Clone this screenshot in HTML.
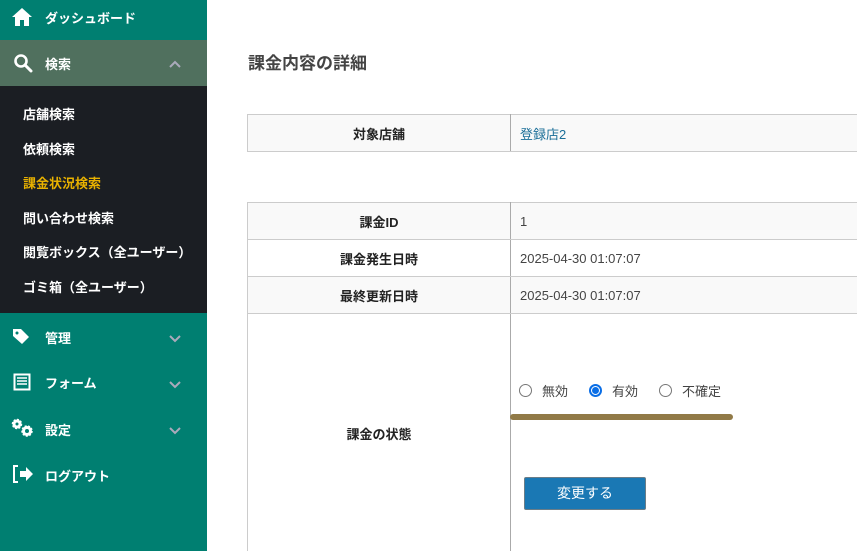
<!DOCTYPE html>
<html><head><meta charset="utf-8"><style>
*{margin:0;padding:0;box-sizing:border-box}
html,body{width:857px;height:551px;overflow:hidden}
body{font-family:"Liberation Sans","Noto Sans CJK JP",sans-serif;background:#fff;position:relative}
.sb{position:absolute;left:0;top:0;width:207px;height:551px;background:#007f71}
.row{position:absolute;left:0;width:207px;color:#fff;font-size:13px;font-weight:bold}
.row .t{position:absolute;left:45px}
.row svg{position:absolute}
.sub{position:absolute;left:0;top:86px;width:207px;height:227px;background:#1b1e23}
.sub div{position:absolute;left:23px;color:#fff;font-size:13px;font-weight:bold}
.chev{position:absolute;left:168px;width:14px;height:10px}
h1{position:absolute;left:248px;top:49px;font-size:17px;color:#444;font-weight:bold}
table{position:absolute;left:247px;width:620px;border-collapse:collapse;font-size:13px}
td{border:1px solid #ccc;height:37px}
td.h{width:263px;text-align:center;font-weight:bold;color:#222;border-right:1px solid #aaa}
td.v{padding-left:9px;color:#444}
.g td{background:#f9f9f9}
</style></head><body>
<div class="sb">
 <div class="row" style="top:0;height:40px">
  <svg style="left:11px;top:7px" width="22" height="20" viewBox="0 0 22 20"><path d="M11 1L1 10h3v9h5v-6h4v6h5v-9h3z" fill="#fff"/></svg>
  <span class="t" style="top:8px">ダッシュボード</span></div>
 <div class="row" style="top:40px;height:46px;background:#50705e">
  <svg style="left:13px;top:13px" width="20" height="20" viewBox="0 0 20 20"><circle cx="8" cy="8" r="5.5" stroke="#fff" stroke-width="2.6" fill="none"/><path d="M12 12l6 6" stroke="#fff" stroke-width="3" stroke-linecap="round"/></svg>
  <span class="t" style="top:14px">検索</span>
  <svg class="chev" style="top:19px" viewBox="0 0 14 10"><path d="M2 8l5-5 5 5" stroke="#aab" stroke-width="2" fill="none"/></svg></div>
 <div class="sub">
  <div style="top:18px">店舗検索</div>
  <div style="top:53px">依頼検索</div>
  <div style="top:87px;color:#e8b100">課金状況検索</div>
  <div style="top:122px">問い合わせ検索</div>
  <div style="top:156px">閲覧ボックス（全ユーザー）</div>
  <div style="top:191px">ゴミ箱（全ユーザー）</div>
 </div>
 <div class="row" style="top:313px;height:46px">
  <svg style="left:12px;top:15px" width="20" height="18" viewBox="0 0 20 18"><path d="M1 1h8l8 8-7 7-9-8z" fill="#fff"/><circle cx="5" cy="5" r="1.5" fill="#007f71"/></svg>
  <span class="t" style="top:15px">管理</span>
  <svg class="chev" style="top:21px" viewBox="0 0 14 10"><path d="M2 2l5 5 5-5" stroke="#aab" stroke-width="2" fill="none"/></svg></div>
 <div class="row" style="top:359px;height:46px">
  <svg style="left:13px;top:14px" width="18" height="18" viewBox="0 0 18 18"><rect x="1.5" y="1.5" width="15" height="15" fill="none" stroke="#fff" stroke-width="2"/><path d="M4 5h10M4 8h10M4 11h10" stroke="#fff" stroke-width="1.5"/></svg>
  <span class="t" style="top:14px">フォーム</span>
  <svg class="chev" style="top:21px" viewBox="0 0 14 10"><path d="M2 2l5 5 5-5" stroke="#aab" stroke-width="2" fill="none"/></svg></div>
 <div class="row" style="top:405px;height:46px">
  <svg style="left:11px;top:13px" width="24" height="20" viewBox="0 0 24 20"><circle cx="6" cy="6" r="4.5" fill="#fff" stroke="#fff" stroke-width="1.5" stroke-dasharray="2 1.5"/><circle cx="16" cy="13" r="5" fill="#fff" stroke="#fff" stroke-width="1.5" stroke-dasharray="2 1.5"/><circle cx="6" cy="6" r="1.5" fill="#007f71"/><circle cx="16" cy="13" r="2" fill="#007f71"/></svg>
  <span class="t" style="top:15px">設定</span>
  <svg class="chev" style="top:21px" viewBox="0 0 14 10"><path d="M2 2l5 5 5-5" stroke="#aab" stroke-width="2" fill="none"/></svg></div>
 <div class="row" style="top:451px;height:46px">
  <svg style="left:12px;top:14px" width="22" height="18" viewBox="0 0 22 18"><path d="M6 1H2v16h4" stroke="#fff" stroke-width="2" fill="none"/><path d="M8 6h6V2l7 7-7 7v-4H8z" fill="#fff"/></svg>
  <span class="t" style="top:15px">ログアウト</span></div>
</div>
<h1>課金内容の詳細</h1>
<table style="top:114px"><tr class="g"><td class="h">対象店舗</td><td class="v" style="color:#1a6e98">登録店2</td></tr></table>
<table style="top:202px">
<tr class="g"><td class="h">課金ID</td><td class="v">1</td></tr>
<tr><td class="h">課金発生日時</td><td class="v">2025-04-30 01:07:07</td></tr>
<tr class="g"><td class="h">最終更新日時</td><td class="v">2025-04-30 01:07:07</td></tr>
<tr><td class="h" style="height:240px">課金の状態</td><td class="v"></td></tr>
</table>
<div style="position:absolute;left:519px;top:381px;font-size:13px;color:#444;display:flex;align-items:center">
 <span style="width:13px;height:13px;border:1px solid #777;border-radius:50%;display:inline-block"></span><span style="margin:0 21px 0 10px">無効</span>
 <span style="width:13px;height:13px;border:2px solid #0a6ee6;border-radius:50%;display:inline-flex;align-items:center;justify-content:center"><span style="width:7px;height:7px;background:#0a6ee6;border-radius:50%"></span></span><span style="margin:0 21px 0 10px">有効</span>
 <span style="width:13px;height:13px;border:1px solid #777;border-radius:50%;display:inline-block"></span><span style="margin-left:10px">不確定</span>
</div>
<div style="position:absolute;left:510px;top:414px;width:223px;height:6px;background:#917a47;border-radius:3px"></div>
<div style="position:absolute;left:524px;top:477px;width:122px;height:33px;background:#1a78b4;border:1px solid #6a7d88;border-radius:2px;color:#fff;font-size:14px;text-align:center;line-height:31px">変更する</div>
</body></html>
